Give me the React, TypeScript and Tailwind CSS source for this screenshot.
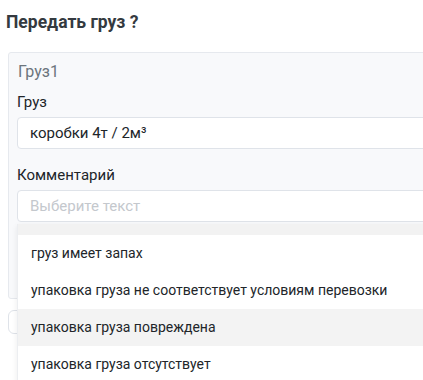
const options = [
  "груз имеет запах",
  "упаковка груза не соответствует условиям перевозки",
  "упаковка груза повреждена",
  "упаковка груза отсутствует",
];

export default function App() {
  return (
    <div className="relative h-[380px] w-[423px] overflow-hidden bg-white font-['Roboto',sans-serif] text-[#212529]">
      <h2 className="px-[6px] pt-[10px] text-[17.5px] font-bold leading-[24px] text-[#343a40]">
        Передать груз ?
      </h2>

      <div className="mt-[18px] ml-[8px] w-[440px] rounded-[3px] border border-[#e6e9ee] bg-[#f8f9fb] px-2 pt-[7px] pb-[76px]">
        <div className="pl-[1px] text-[16px] leading-[24px] text-[#6c757d]">Груз1</div>

        <label className="mt-[8px] block text-[15px] leading-[21px]">Груз</label>
        <div className="mt-[4px] flex h-[32px] items-center rounded-[4px] border border-[#dfe3e9] bg-white px-3 text-[15px]">
          коробки 4т / 2м³
        </div>

        <label className="mt-[16px] block text-[15px] leading-[21px]">Комментарий</label>
        <div className="mt-[4px] flex h-[32px] items-center rounded-[4px] border border-[#dfe3e9] bg-white px-3 text-[15px] text-[#c4c8cd]">
          Выберите текст
        </div>
      </div>

      <div className="mt-[11px] ml-[8px] h-[24px] w-[60px] rounded-[6px] border border-[#dfe3e9] bg-white" />

      <div className="absolute top-[224px] left-[17px] w-[420px] border-l border-[#eceef1] bg-white shadow-[0_2px_6px_rgba(0,0,0,0.08)]">
        <div className="h-[11px] bg-[#f2f2f2]" />
        {options.map((o, i) => (
          <div
            key={o}
            className={`flex h-[37px] items-center px-[13px] text-[14px] text-[#212529] ${i === 2 ? "bg-[#f3f3f3]" : "bg-white"}`}
          >
            {o}
          </div>
        ))}
      </div>
    </div>
  );
}
